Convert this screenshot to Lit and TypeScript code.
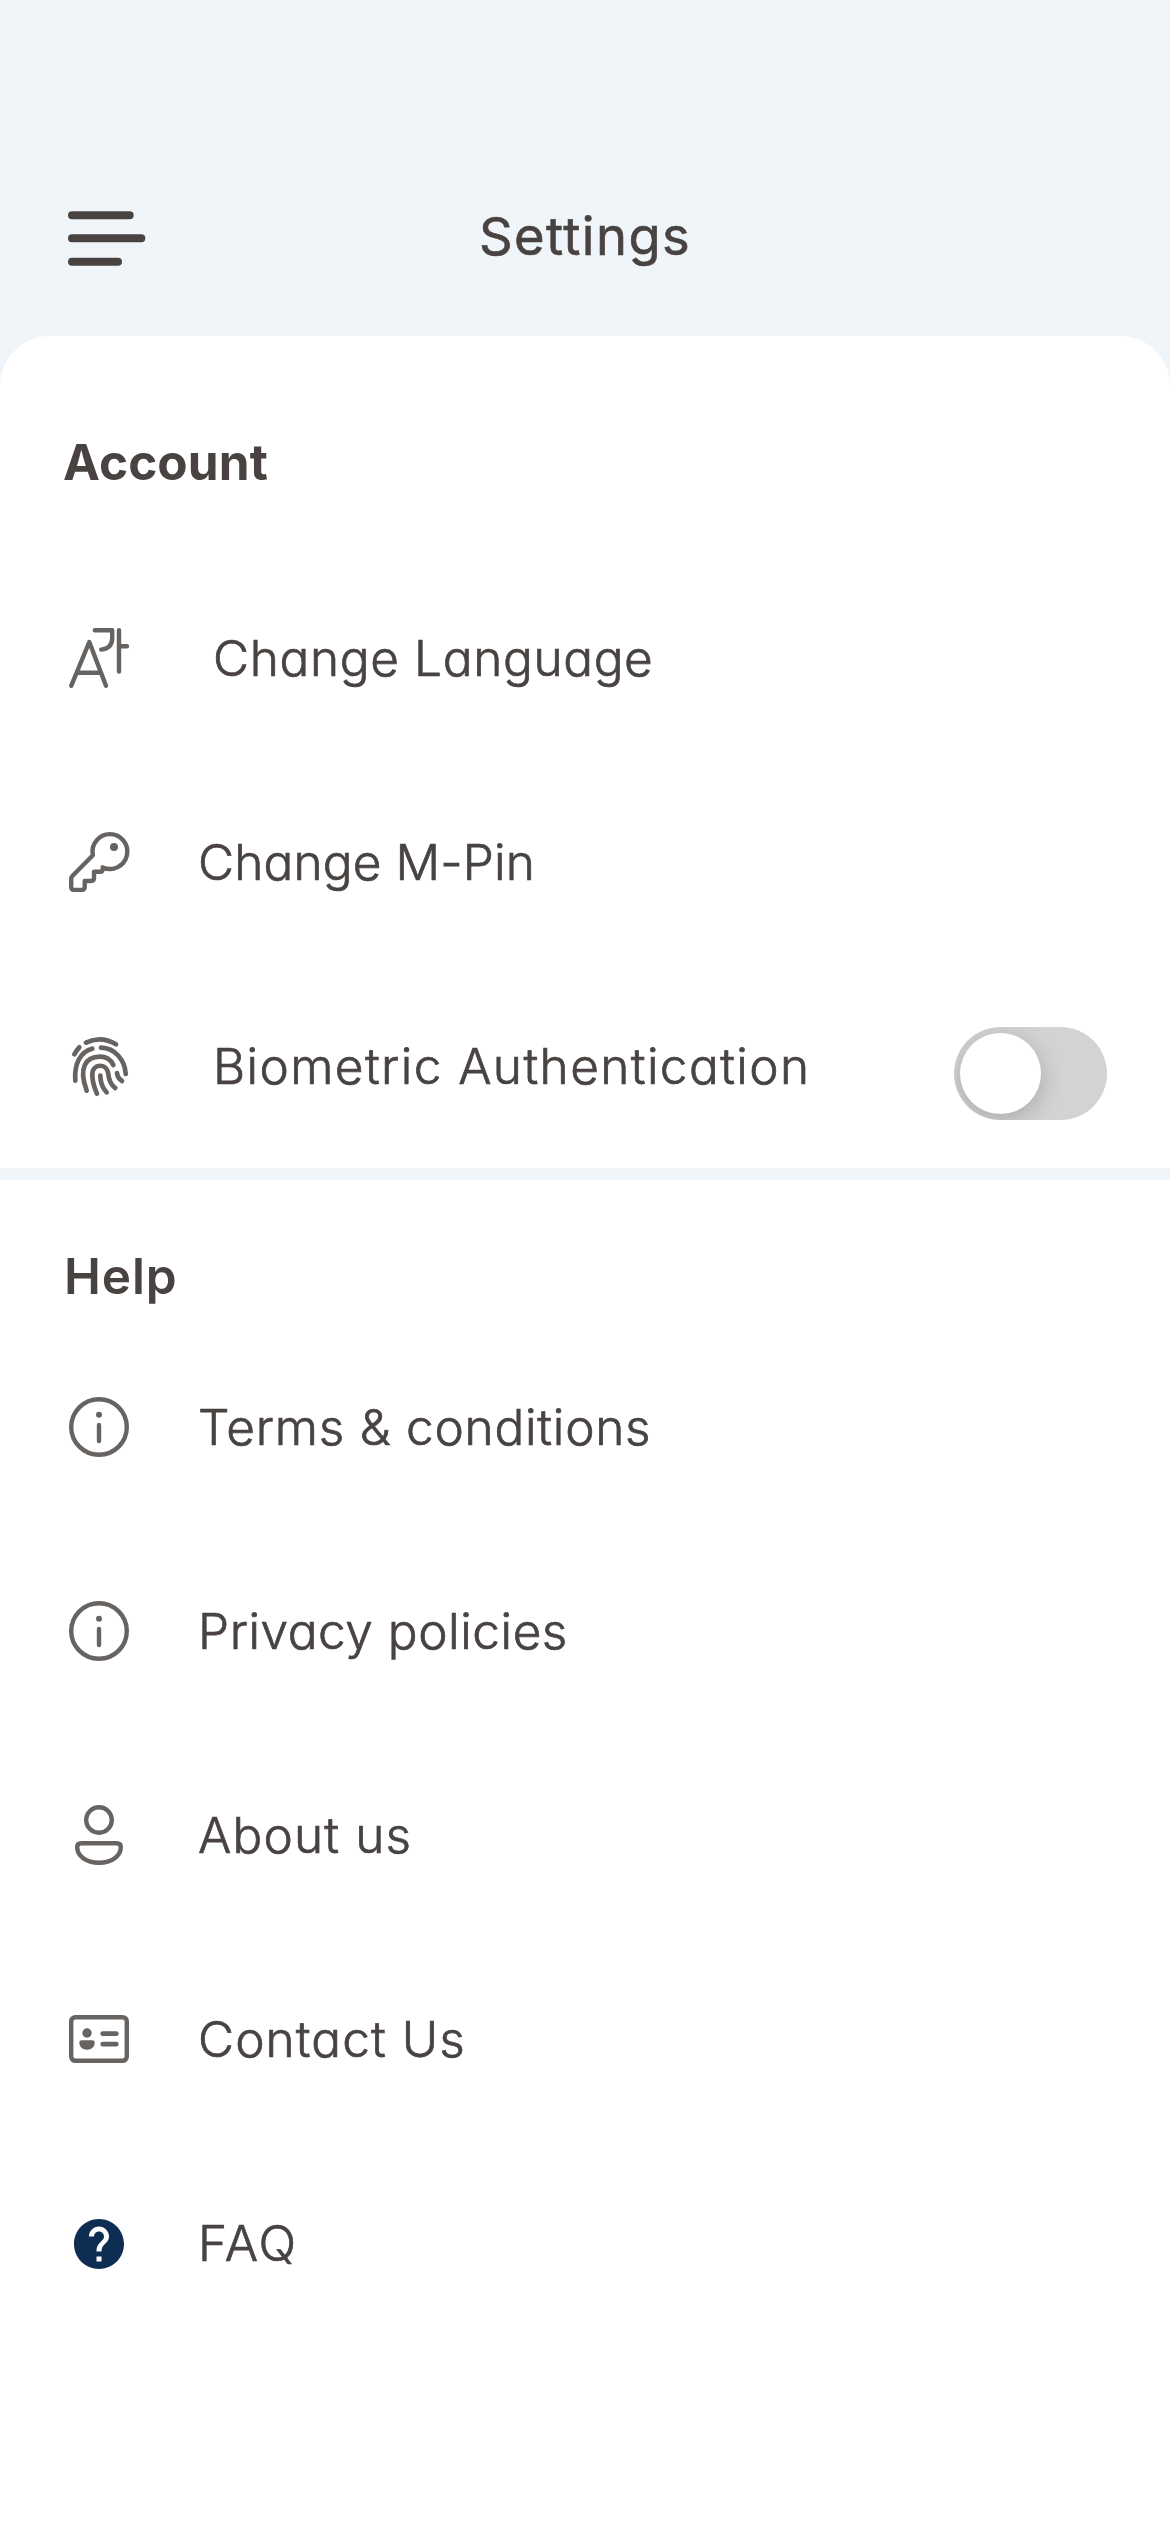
import { LitElement, html, svg, css, type SVGTemplateResult } from "lit";
import { customElement, property } from "lit/decorators.js";
import { classMap } from "lit/directives/class-map.js";
import { styleMap } from "lit/directives/style-map.js";

type IconName = "language" | "key" | "fingerprint" | "info" | "user" | "card" | "help";

interface Item {
  icon: IconName;
  label: string;
  tracking: number;
  indent?: boolean;
  toggle?: boolean;
}

const ICONS: Record<IconName, SVGTemplateResult> = {
  language: svg`<g stroke-width="4.4">
    <path d="M2.2 57.8L20.3 14L37 57.8M8 44.7H31.5"/>
    <path d="M25.8 2.2H43.2V10.5Q43 20.5 32.2 21.6"/>
    <path d="M50 2.2V43.5M50 18.3H58"/></g>`,
  key: svg`<path stroke-width="4.4" d="M33.7 35.4A17.4 17.4 0 1 0 23.9 23.2L3.6 43.8Q2.2 45.3 2.2 47.4V55Q2.2 57.9 5 57.9H13Q15.7 57.9 15.7 55V49H22Q25 49 25 46V39.8H31Q33.7 39.8 33.7 37ZM33.7 35.4Q37 37 41 37"/>
    <circle class="solid" cx="45" cy="15" r="4"/>`,
  fingerprint: svg`<g stroke-width="4.7">
    <path d="M17 6.7Q32 -.8 47 8.3M5.3 18.3Q7.4 14.4 10.3 11.3"/>
    <path d="M23.3 12.7C12 15.5 5 27 6.3 44.7M32 11.7C46 12 56 24 56.7 38"/>
    <path d="M17.7 54.7C9 31 17 21 31 20.7C37 20.7 42 24 44.3 29"/>
    <path d="M28 57.7C24.5 50 23.3 45 23.3 38.5C23.3 27 38 27 39.2 37.5C39.8 44 42 49 46.3 52"/>
    <path d="M31.3 39.7Q31.5 50 37.7 56.3M48 37Q48.5 42 53 45"/></g>`,
  info: svg`<circle cx="30" cy="30" r="27.8" stroke-width="4.4"/>
    <circle class="solid" cx="30" cy="17.7" r="3"/>
    <path stroke-width="4.4" d="M30 28V44.1"/>`,
  user: svg`<g stroke-width="4.4"><circle cx="30" cy="15" r="12.8"/>
    <path d="M12.2 38.2H47.8Q51.8 38.2 51.8 42C51.8 51 43 57.8 30 57.8S8.2 51 8.2 42Q8.2 38.2 12.2 38.2Z"/></g>`,
  card: svg`<rect x="2.2" y="8.2" width="55.6" height="43.6" rx="4.2" stroke-width="4.4"/>
    <circle class="solid" cx="18" cy="24" r="4.7"/>
    <path class="solid" d="M12.5 31.3H23.5Q25.7 31.3 25.7 33.5C25.7 38 22.5 40.7 18 40.7S10.3 38 10.3 33.5Q10.3 31.3 12.5 31.3Z"/>
    <path stroke-width="4.7" d="M33.7 24.7H47.3M33.7 35.2H47.3"/>`,
  help: svg`<path class="navy" transform="translate(0 1) scale(2.5)" d="M12 2C6.48 2 2 6.48 2 12s4.48 10 10 10 10-4.48 10-10S17.52 2 12 2zm1 17h-2v-2h2v2zm2.07-7.75l-.9.92C13.45 12.9 13 13.5 13 15h-2v-.5c0-1.1.45-2.1 1.17-2.83l1.24-1.26c.37-.36.59-.86.59-1.41 0-1.1-.9-2-2-2s-2 .9-2 2H8c0-2.21 1.79-4 4-4s4 1.79 4 4c0 .88-.36 1.68-.93 2.25z"/>`,
};

const ACCOUNT: Item[] = [
  { icon: "language", label: "Change Language", tracking: 0.65, indent: true },
  { icon: "key", label: "Change M-Pin", tracking: 0.15 },
  { icon: "fingerprint", label: "Biometric Authentication", tracking: 1.4, indent: true, toggle: true },
];

const HELP: Item[] = [
  { icon: "info", label: "Terms & conditions", tracking: 0.75 },
  { icon: "info", label: "Privacy policies", tracking: 0.55 },
  { icon: "user", label: "About us", tracking: 1.15 },
  { icon: "card", label: "Contact Us", tracking: 1.1 },
  { icon: "help", label: "FAQ", tracking: 2 },
];

@customElement("settings-row")
class SettingsRow extends LitElement {
  @property({ attribute: false }) item!: Item;

  static styles = css`
    :host { display: flex; align-items: center; height: 204px; padding: 0 63px 0 69px; box-sizing: border-box; }
    .icon { flex: none; width: 60px; height: 60px; overflow: visible; fill: none; stroke: #676361; stroke-linecap: round; stroke-linejoin: round; }
    .solid { fill: #676361; stroke: none; }
    .navy { fill: #0d2d52; stroke: none; }
    .label { flex: 1; margin-left: 69px; font-size: 49.5px; line-height: 60px; font-weight: 300; -webkit-text-stroke: 0.7px #484341; white-space: nowrap; }
    .indent { margin-left: 84px; }
    .toggle { flex: none; box-sizing: border-box; width: 153px; height: 93px; padding: 6px; margin-top: 15px; border-radius: 47px; background: #d3d3d5; overflow: hidden; }
    .knob { width: 81px; height: 81px; border-radius: 50%; background: #fff; box-shadow: 0 6px 24px rgba(0, 0, 0, 0.2); }
  `;

  render() {
    const { icon, label, tracking, indent, toggle } = this.item;
    return html`
      <svg class="icon" viewBox="0 0 60 60">${ICONS[icon]}</svg>
      <span class=${classMap({ label: true, indent: !!indent })} style=${styleMap({ letterSpacing: `${tracking}px` })}>${label}</span>
      ${toggle ? html`<div class="toggle"><div class="knob"></div></div>` : null}
    `;
  }
}

@customElement("app-root")
class AppRoot extends LitElement {
  static styles = css`
    :host { display: block; height: 2532px; overflow: hidden; background: #f0f5fa; color: #484341; font-family: Inter, "Liberation Sans", sans-serif; font-feature-settings: "cv11"; }
    .page { display: flex; flex-direction: column; height: 100%; }
    .header { display: grid; grid-template-columns: 1fr auto 1fr; align-items: center; height: 336px; padding: 136px 68px 0; box-sizing: border-box; }
    .menu { width: 78px; height: 55px; margin-top: 5px; fill: none; stroke: #484341; stroke-width: 8; stroke-linecap: round; }
    .title { margin: 0; font-size: 52.5px; line-height: 64px; font-weight: 400; letter-spacing: 1.4px; -webkit-text-stroke: 0.6px #484341; }
    .account { background: #fff; border-radius: 50px 50px 0 0; }
    .help { flex: 1; margin-top: 12px; background: #fff; }
    .heading { margin: 0; padding: 96px 63px 0; height: 220px; box-sizing: border-box; font-size: 49.5px; line-height: 60px; font-weight: 700; letter-spacing: 0.1px; }
    .help .heading { padding: 66px 64px 0; height: 145px; font-weight: 600; letter-spacing: 0.9px; }
  `;

  render() {
    return html`
      <div class="page">
        <header class="header">
          <svg class="menu" viewBox="0 0 78 55"><path d="M4 4.3H61.7M4 27.3H73.3M4 50.7H50"/></svg>
          <h1 class="title">Settings</h1>
        </header>
        <section class="account">
          <h2 class="heading">Account</h2>
          ${ACCOUNT.map((item) => html`<settings-row .item=${item}></settings-row>`)}
        </section>
        <section class="help">
          <h2 class="heading">Help</h2>
          ${HELP.map((item) => html`<settings-row .item=${item}></settings-row>`)}
        </section>
      </div>
    `;
  }
}
